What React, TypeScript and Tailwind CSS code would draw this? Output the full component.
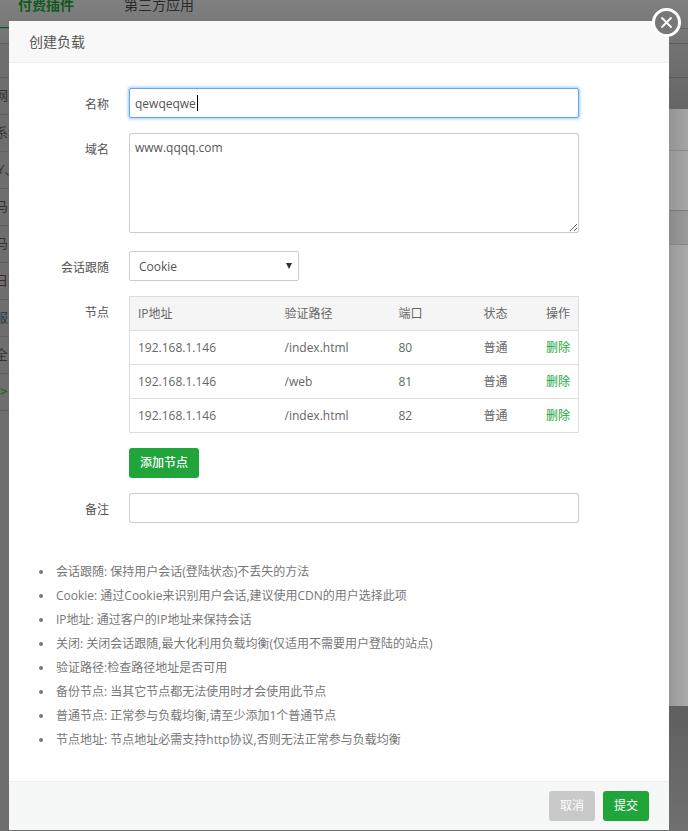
const nodes = [
  { ip: "192.168.1.146", path: "/index.html", port: "80" },
  { ip: "192.168.1.146", path: "/web", port: "81" },
  { ip: "192.168.1.146", path: "/index.html", port: "82" },
]

const tips = [
  "会话跟随: 保持用户会话(登陆状态)不丢失的方法",
  "Cookie: 通过Cookie来识别用户会话,建议使用CDN的用户选择此项",
  "IP地址: 通过客户的IP地址来保持会话",
  "关闭: 关闭会话跟随,最大化利用负载均衡(仅适用不需要用户登陆的站点)",
  "验证路径:检查路径地址是否可用",
  "备份节点: 当其它节点都无法使用时才会使用此节点",
  "普通节点: 正常参与负载均衡,请至少添加1个普通节点",
  "节点地址: 节点地址必需支持http协议,否则无法正常参与负载均衡",
]

// rows of the page behind the overlay, only their left edge shows
const behindRows = [
  { text: "网站", className: "-ml-[5px] text-[#333]" },
  { text: "系统", className: "-ml-[5px] text-[#333]" },
  { text: "Y、", className: "-ml-[3px] text-[#333]" },
  { text: "马", className: "-ml-[5px] text-[#333]" },
  { text: "马", className: "-ml-[5px] text-[#333]" },
  { text: "日志", className: "-ml-[5px] text-[#3a2a2a]" },
  { text: "服务", className: "-ml-[5px] text-[#2f3a44]" },
  { text: "全", className: "-ml-[5px] text-[#333]" },
  { text: ">", className: "ml-0 text-[#0d5a1c]" },
]

const Backdrop = () => (
  <div className="flex h-full flex-col">
    <div className="h-[44px] shrink-0 border-b border-[#5f5f5f] bg-gradient-to-b from-[#808080] to-[#737373]">
      <div className="flex h-[29px] items-start overflow-hidden border-b border-[#666] text-sm leading-[10px]">
        <span className="h-[29px] w-[92px] shrink-0 border-b-2 border-[#0f5c1e] pl-[18px] font-bold text-[#0d5a1c]">
          付费插件
        </span>
        <span className="ml-[32px] text-[#2a2a2a]">第三方应用</span>
      </div>
    </div>
    <div className="flex min-h-0 flex-1 justify-between">
      <div className="w-[60px]">
        <div className="h-[34px] border-b border-[#5f5f5f]" />
        {behindRows.map((row, i) => (
          <div
            key={i}
            className="flex h-[37px] items-center overflow-hidden border-b border-[#5f5f5f] text-[13px]"
          >
            <span className={row.className}>{row.text}</span>
          </div>
        ))}
      </div>
      <div className="flex w-[19px] flex-col">
        <div className="h-[34px] border-b border-[#5c5c5c] bg-gradient-to-b from-[#737373] to-[#6c6c6c]" />
        <div className="h-[31px] bg-gradient-to-b from-[#6c6c6c] to-[#656565]" />
        <div className="h-[42px] border-b border-[#868686] bg-gradient-to-r from-[#949494] to-[#a4a4a4]" />
        <div className="h-[60px] border-b border-[#7c7c7c] bg-gradient-to-r from-[#969696] to-[#a6a6a6]" />
        <div className="h-[34px] border-b border-[#868686] bg-gradient-to-r from-[#8a8a8a] to-[#9a9a9a]" />
        <div className="h-[461px] bg-gradient-to-r from-[#989898] to-[#aaaaaa]" />
        <div className="flex-1 bg-gradient-to-b from-[#5f5f5f] to-[#707070]" />
      </div>
    </div>
  </div>
)

const Field = ({
  label,
  labelClass = "pt-[9px]",
  children,
}: {
  label: string
  labelClass?: string
  children: React.ReactNode
}) => (
  <div className="flex gap-5">
    <label className={`w-[100px] shrink-0 text-right text-xs leading-[16px] text-[#555] ${labelClass}`}>
      {label}
    </label>
    <div className="w-[450px]">{children}</div>
  </div>
)

const NodeTable = () => (
  <table className="w-[450px] table-fixed border-collapse border border-[#ddd] text-xs text-[#666]">
    <thead>
      <tr className="h-[34px] bg-[#f5f5f5] text-left">
        <th className="w-[147px] pl-2 font-normal">IP地址</th>
        <th className="w-[114px] pl-2 font-normal">验证路径</th>
        <th className="w-[85px] pl-2 font-normal">端口</th>
        <th className="w-[62px] pl-2 font-normal">状态</th>
        <th className="pr-2 text-right font-normal">操作</th>
      </tr>
    </thead>
    <tbody>
      {nodes.map((node, i) => (
        <tr key={i} className="h-[34px] border-t border-[#ddd]">
          <td className="pl-2">{node.ip}</td>
          <td className="pl-2">{node.path}</td>
          <td className="pl-2">{node.port}</td>
          <td className="pl-2">普通</td>
          <td className="pr-2 text-right">
            <a className="text-[#20a53a]">删除</a>
          </td>
        </tr>
      ))}
    </tbody>
  </table>
)

const Modal = () => (
  <div className="absolute top-[21px] left-[9px] flex h-[809px] w-[660px] flex-col bg-white">
    <div className="flex h-[42px] shrink-0 items-center border-b border-[#eee] bg-[#f8f8f8] pl-5 text-sm text-[#555]">
      创建负载
    </div>

    <div className="flex flex-1 flex-col pt-[25px]">
      <div className="flex flex-col gap-[15px]">
        <Field label="名称">
          <div className="relative">
            <input
              readOnly
              value="qewqeqwe"
              className="block h-[30px] w-full rounded-[2px] border border-[#5ea6ff] px-[5px] pt-px text-xs text-[#555] shadow-[0_0_3px_1px_rgba(94,166,255,0.6)] outline-none"
            />
            <span className="absolute top-[7px] left-[68px] h-[16px] w-px bg-black" />
          </div>
        </Field>
        <Field label="域名">
          <textarea
            readOnly
            value="www.qqqq.com"
            className="block h-[100px] w-full rounded-[2px] border border-[#ccc] px-[5px] py-[6px] text-xs leading-[16px] text-[#555] outline-none"
          />
        </Field>
        <div className="mt-[3px]">
          <Field label="会话跟随">
            <div className="relative w-[170px]">
              <select className="block h-[30px] w-full appearance-none rounded-[2px] border border-[#ccc] bg-white pt-px pl-[9px] text-xs text-[#555] outline-none">
                <option>Cookie</option>
              </select>
              <svg className="absolute top-[12px] right-[7px]" width="6" height="6" viewBox="0 0 6 6">
                <path d="M0 0h6L3 6z" fill="#333" />
              </svg>
            </div>
          </Field>
        </div>
        <Field label="节点" labelClass="pt-[9px]">
          <NodeTable />
        </Field>
        <Field label="">
          <button className="h-[30px] w-[70px] rounded-[3px] bg-[#20a53a] text-xs font-medium text-white">
            添加节点
          </button>
        </Field>
        <Field label="备注">
          <input className="block h-[30px] w-full rounded-[2px] border border-[#ccc] px-[5px] text-xs text-[#555] outline-none" />
        </Field>
      </div>

      <ul className="mt-[37px] ml-[30px] text-xs leading-[24px] text-[#777]">
        {tips.map((tip) => (
          <li key={tip} className="flex items-center">
            <span className="mr-[13px] h-[4px] w-[4px] rounded-full bg-[#777]" />
            {tip}
          </li>
        ))}
      </ul>
    </div>

    <div className="flex h-[49px] shrink-0 items-center justify-end gap-2 border-t border-[#eee] bg-[#f6f8f8] pr-5">
      <button className="h-[30px] w-[46px] rounded-[3px] bg-[#c9c9c9] text-xs text-white">取消</button>
      <button className="h-[30px] w-[46px] rounded-[3px] bg-[#20a53a] text-xs text-white">提交</button>
    </div>
  </div>
)

const CloseButton = () => (
  <button className="absolute top-[8px] left-[652px] flex h-[29px] w-[29px] items-center justify-center rounded-full border-[3px] border-white bg-[#777]">
    <svg width="13" height="13" viewBox="0 0 13 13" fill="none" stroke="#fff" strokeWidth="1.8" strokeLinecap="round">
      <path d="M2 2l9 9M11 2l-9 9" />
    </svg>
  </button>
)

export default function App() {
  return (
    <div className="relative h-[831px] w-full overflow-hidden bg-[#6e6e6e] font-['Open_Sans','Noto_Sans_CJK_SC',sans-serif]">
      <Backdrop />
      <Modal />
      <CloseButton />
    </div>
  )
}
